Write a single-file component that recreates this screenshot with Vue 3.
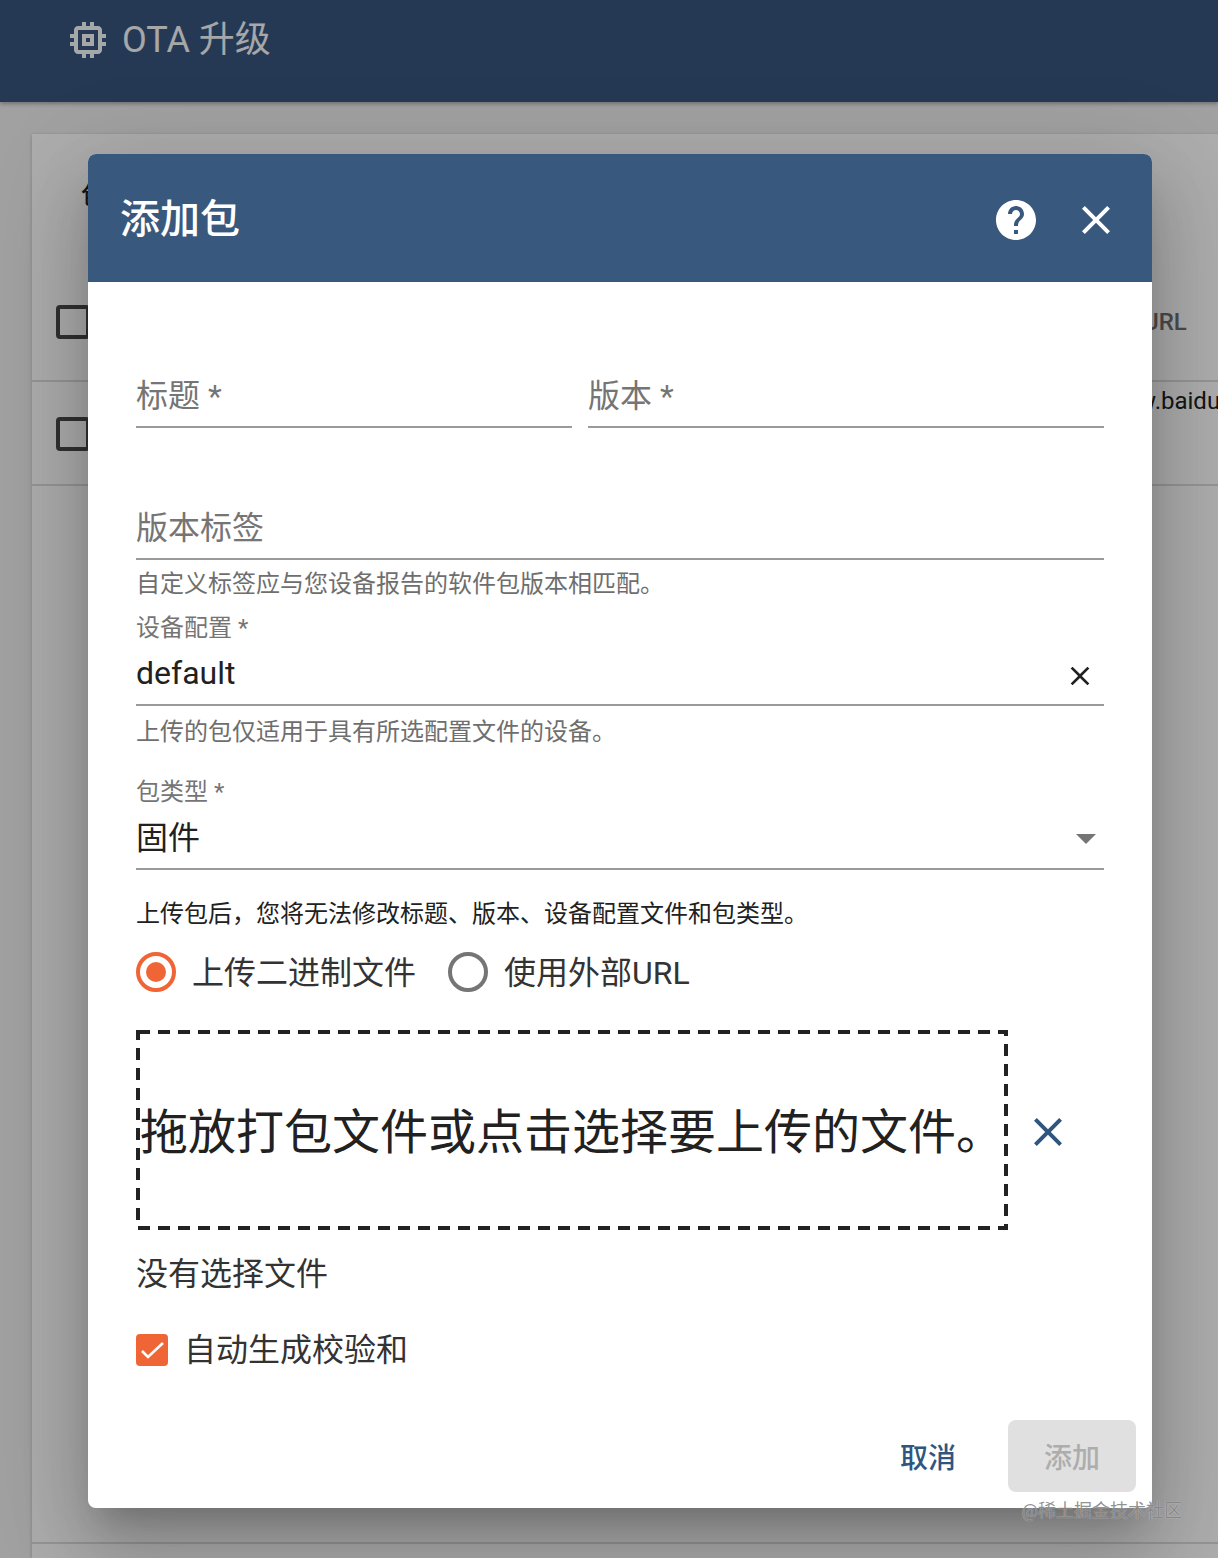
<template>
  <div class="page">
    <header class="topbar">
      <svg class="chip" viewBox="0 0 24 24" fill="currentColor">
        <path d="M15 9H9v6h6V9zm-2 4h-2v-2h2v2zm8-2V9h-2V7c0-1.1-.9-2-2-2h-2V3h-2v2h-2V3H9v2H7c-1.1 0-2 .9-2 2v2H3v2h2v2H3v2h2v2c0 1.1.9 2 2 2h2v2h2v-2h2v2h2v-2h2c1.1 0 2-.9 2-2v-2h2v-2h-2v-2h2zm-4 6H7V7h10v10z"/>
      </svg>
      <span class="topbar-title">OTA 升级</span>
    </header>

    <section class="card">
      <h2 class="card-title">包</h2>
      <div class="table-row table-head">
        <span class="box"></span>
        <span class="cell">直接URL</span>
      </div>
      <div class="table-row table-body">
        <span class="box"></span>
        <span class="cell">www.baidu.com</span>
      </div>
      <div class="card-foot"></div>
    </section>

    <div class="backdrop"></div>

    <div class="overlay">
      <div class="modal">
        <div class="modal-head">
          <h1>添加包</h1>
          <button class="icon-btn">
            <svg viewBox="0 0 24 24" fill="#fff"><path d="M12 2C6.48 2 2 6.48 2 12s4.48 10 10 10 10-4.48 10-10S17.52 2 12 2zm1 17h-2v-2h2v2zm2.07-7.75l-.9.92C13.45 12.9 13 13.5 13 15h-2v-.5c0-1.1.45-2.1 1.17-2.83l1.24-1.26c.37-.36.59-.86.59-1.41 0-1.1-.9-2-2-2s-2 .9-2 2H8c0-2.21 1.79-4 4-4s4 1.79 4 4c0 .88-.36 1.68-.93 2.25z"/></svg>
          </button>
          <button class="icon-btn">
            <svg viewBox="0 0 24 24" fill="#fff"><path :d="closePath"/></svg>
          </button>
        </div>

        <div class="form">
          <div class="row-two">
            <div class="input first">标题 *</div>
            <div class="input first grow">版本 *</div>
          </div>
          <div class="input second">版本标签</div>
          <p class="hint">自定义标签应与您设备报告的软件包版本相匹配。</p>

          <div class="select">
            <label>设备配置 *</label>
            <div class="value">
              <span>default</span>
              <svg class="clear" viewBox="0 0 24 24" fill="#212121"><path :d="closePath"/></svg>
            </div>
          </div>
          <p class="hint lower">上传的包仅适用于具有所选配置文件的设备。</p>

          <div class="select type">
            <label>包类型 *</label>
            <div class="value">
              <span>固件</span>
              <i class="arrow"></i>
            </div>
          </div>

          <p class="notice">上传包后，您将无法修改标题、版本、设备配置文件和包类型。</p>

          <div class="radios">
            <div class="radio on"><i></i><span>上传二进制文件</span></div>
            <div class="radio"><i></i><span>使用外部URL</span></div>
          </div>

          <div class="drop-row">
            <div class="dropzone">
              <svg class="dash" width="872" height="200">
                <rect x="2" y="2" width="868" height="196" fill="none" stroke="#222" stroke-width="4" stroke-dasharray="12 8"/>
              </svg>
              <span>拖放打包文件或点击选择要上传的文件。</span>
            </div>
            <svg class="drop-clear" viewBox="0 0 24 24" fill="#305680"><path :d="closePath"/></svg>
          </div>

          <p class="no-file">没有选择文件</p>

          <div class="checkline">
            <span class="checkbox">
              <svg width="32" height="32" viewBox="0 0 32 32" fill="none"><path d="M6 17l6 6 15-14" stroke="#fff" stroke-width="2.600"/></svg>
            </span>
            <span>自动生成校验和</span>
          </div>
        </div>

        <div class="actions">
          <button class="cancel">取消</button>
          <button class="add" disabled>添加</button>
        </div>
      </div>
    </div>

    <div class="watermark">@稀土掘金技术社区</div>
  </div>
</template>

<script setup>
const closePath = 'M19 6.41L17.59 5 12 10.59 6.41 5 5 6.41 10.59 12 5 17.59 6.41 19 12 13.41 17.59 19 19 17.59 13.41 12z'
</script>

<style scoped>
.page {
  position: relative;
  height: 1558px;
  overflow: hidden;
  background: #eeeeee;
  font-family: Roboto, "Noto Sans CJK SC", sans-serif;
  color: #212121;
}

.topbar {
  display: flex;
  align-items: flex-start;
  height: 102px;
  padding: 16px 0 0 64px;
  box-sizing: border-box;
  background: #38557d;
  color: #fff;
  box-shadow: 0 2px 4px rgba(0, 0, 0, 0.3);
}

.chip {
  width: 48px;
  height: 48px;
  opacity: 0.95;
}

.topbar-title {
  margin-left: 10px;
  font-size: 36px;
  line-height: 48px;
  opacity: 0.95;
}

.card {
  width: 1300px;
  height: 1424px;
  margin: 32px 0 0 32px;
  background: #fff;
  box-shadow: 0 1px 4px rgba(0, 0, 0, 0.2);
}

.card-title {
  height: 120px;
  box-sizing: border-box;
  margin: 0;
  padding: 50px 0 0 49px;
  font-size: 24px;
  line-height: 24px;
  font-weight: 500;
}

.table-row {
  display: grid;
  grid-template-columns: 1048px 1fr;
  align-items: center;
  padding-left: 24px;
  border-bottom: 2px solid #dcdcdc;
  font-size: 24px;
}

.table-head {
  height: 128px;
  box-sizing: border-box;
  font-weight: 500;
  color: #6f6f6f;
}

.table-head .cell {
  margin-left: -9px;
  transform: translateY(2px);
}

.table-head .box {
  transform: translateY(5px);
}

.table-body {
  height: 104px;
  box-sizing: border-box;
}

.table-body .cell {
  margin-left: -2px;
  transform: translateY(-32px);
}

.table-body .box {
  transform: translateY(1px);
}

.box {
  width: 26px;
  height: 26px;
  border: 4px solid rgba(0, 0, 0, 0.95);
  border-radius: 4px;
  opacity: 0.75;
}

.card-foot {
  height: 1056px;
  border-bottom: 2px solid #dcdcdc;
}

.backdrop {
  position: absolute;
  inset: 0;
  background: rgba(0, 0, 0, 0.32);
}

.overlay {
  position: absolute;
  top: 154px;
  left: 88px;
  border-radius: 8px;
  box-shadow: 0 22px 30px -14px rgba(0, 0, 0, 0.2), 0 48px 76px 6px rgba(0, 0, 0, 0.14), 0 18px 92px 16px rgba(0, 0, 0, 0.12);
}

.modal {
  display: flex;
  flex-direction: column;
  width: 1064px;
  height: 1354px;
  background: #fff;
  border-radius: 8px;
  overflow: hidden;
}

.modal-head {
  display: flex;
  align-items: center;
  flex: none;
  height: 128px;
  padding: 0 16px 0 32px;
  background: #39587e;
  color: #fff;
}

.modal-head h1 {
  flex: 1;
  margin: 4px 0 0;
  font-size: 40px;
  line-height: 48px;
  font-weight: 500;
}

.icon-btn {
  display: flex;
  align-items: center;
  justify-content: center;
  width: 80px;
  height: 80px;
  padding: 0;
  margin-top: 4px;
  background: none;
  border: none;
}

.icon-btn svg {
  width: 48px;
  height: 48px;
}

.form {
  display: flex;
  flex-direction: column;
  padding: 0 48px;
}

.row-two {
  display: flex;
  gap: 16px;
  margin-top: 74px;
}

.row-two .first {
  width: 436px;
}

.row-two .grow {
  flex: 1;
}

.input {
  height: 72px;
  box-sizing: border-box;
  padding: 24px 0 14px;
  border-bottom: 2px solid #9a9a9a;
  font-size: 32px;
  line-height: 32px;
  color: #757575;
}

.second {
  margin-top: 60px;
}

.hint {
  height: 48px;
  margin: 0;
  font-size: 24px;
  line-height: 48px;
  color: #6e6e6e;
}

.hint.lower {
  line-height: 52px;
}

.select {
  height: 98px;
  box-sizing: border-box;
  border-bottom: 2px solid #9a9a9a;
}

.select.type {
  margin-top: 18px;
}

.select label {
  display: block;
  height: 40px;
  font-size: 24px;
  line-height: 40px;
  color: #757575;
}

.value {
  display: flex;
  align-items: center;
  justify-content: space-between;
  height: 48px;
  box-sizing: border-box;
  padding-top: 2px;
  font-size: 32px;
  line-height: 46px;
  color: #212121;
}

.type .value {
  padding-top: 4px;
  line-height: 44px;
}

.clear {
  width: 32px;
  height: 32px;
  margin: 6px 8px 0 0;
}

.arrow {
  width: 0;
  height: 0;
  margin: 2px 8px 0 0;
  border-left: 10px solid transparent;
  border-right: 10px solid transparent;
  border-top: 10px solid #757575;
}

.notice {
  margin: 28px 0 0;
  font-size: 24px;
  line-height: 32px;
  color: #212121;
}

.radios {
  display: flex;
  gap: 32px;
  height: 40px;
  margin-top: 22px;
}

.radio {
  display: flex;
  align-items: center;
  gap: 16px;
  height: 40px;
  font-size: 32px;
  line-height: 40px;
  color: #333;
}

.radio span {
  height: 40px;
  line-height: 42px;
}

.radio i {
  position: relative;
  width: 40px;
  height: 40px;
  box-sizing: border-box;
  border: 4px solid #757575;
  border-radius: 50%;
}

.radio.on i {
  border-color: #f06535;
}

.radio.on i::after {
  content: "";
  position: absolute;
  inset: 6px;
  border-radius: 50%;
  background: #f06535;
}

.drop-row {
  display: flex;
  align-items: center;
  margin-top: 38px;
}

.dropzone {
  position: relative;
  display: flex;
  align-items: center;
  justify-content: center;
  width: 872px;
  height: 200px;
  box-sizing: border-box;
  padding-top: 6px;
  font-size: 48px;
  line-height: 56px;
  color: #212121;
}

.dash {
  position: absolute;
  inset: 0;
}

.drop-clear {
  width: 48px;
  height: 48px;
  margin-left: 16px;
  margin-top: 4px;
}

.no-file {
  margin: 28px 0 0;
  font-size: 32px;
  line-height: 32px;
  color: #333;
}

.checkline {
  display: flex;
  align-items: center;
  gap: 16px;
  margin-top: 44px;
  font-size: 32px;
  line-height: 32px;
  color: #333;
}

.checkbox {
  width: 32px;
  height: 32px;
  background: #f06535;
  border-radius: 4px;
}

.checkbox svg {
  display: block;
}

.actions {
  display: flex;
  align-items: center;
  justify-content: flex-end;
  gap: 16px;
  margin-top: auto;
  padding: 0 16px 16px 0;
}

.actions button {
  height: 72px;
  padding: 0;
  border: none;
  border-radius: 8px;
  font-family: inherit;
  font-size: 28px;
  font-weight: 500;
}

.cancel {
  width: 128px;
  background: none;
  color: #305680;
}

.add {
  width: 128px;
  background: #e0e0e0;
  color: #adadad;
}

.watermark {
  position: absolute;
  top: 1498px;
  right: 36px;
  font-size: 18px;
  line-height: 26px;
  color: rgba(110, 110, 110, 0.75);
  text-shadow: 0 0 1px rgba(255, 255, 255, 0.7);
}
</style>
